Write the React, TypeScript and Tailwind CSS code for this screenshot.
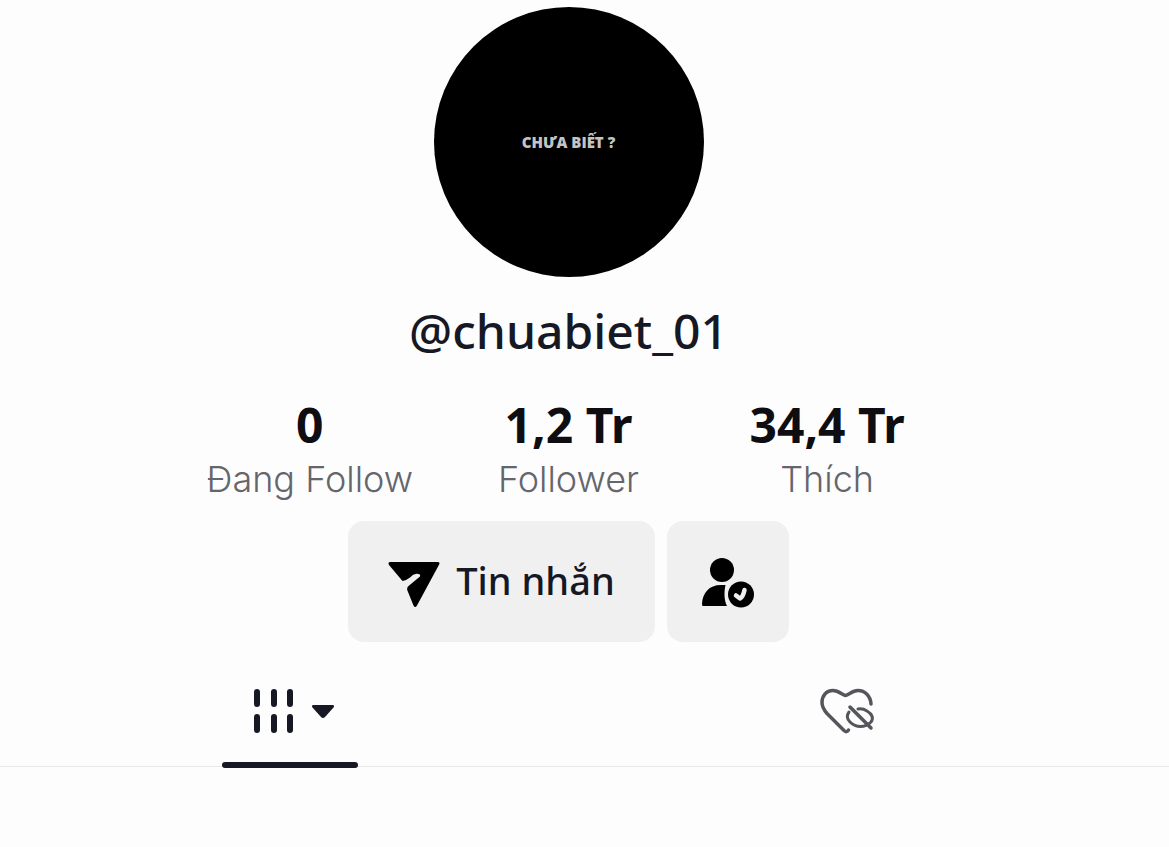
const stats = [
  { value: "0", label: "Đang Follow" },
  { value: "1,2 Tr", label: "Follower" },
  { value: "34,4 Tr", label: "Thích" },
];

function SendIcon() {
  return (
    <svg width="52" height="50" viewBox="0 -4 52 50" fill="currentColor" aria-hidden="true">
      <path d="M2.5 1H49.5Q52.5 1 51 3.700L29 44.500Q27 47.500 25.500 44.500L19.600 30Q18.300 27 20.500 25L32 15.500Q33 12.500 28.500 12.700Q25 13 22 16.500Q19 19 14.500 20L1 4Q-.5 1 2.500 1Z" />
    </svg>
  );
}

function UserCheckIcon() {
  return (
    <svg width="54" height="52" viewBox="0 -1 54 52" fill="currentColor" aria-hidden="true">
      <circle cx="21" cy="13" r="12" />
      <path d="M2 49Q1 49 1 47C1.500 36 8 28 20 28H24.500C23 35 23 43 26 49Z" />
      <circle cx="40" cy="37.500" r="13" />
      <path d="M35 38.500L39 41.500Q42 40 43.500 33" fill="none" stroke="#f0f0f0" strokeWidth="4.500" strokeLinecap="round" strokeLinejoin="round" />
    </svg>
  );
}

function GridIcon() {
  return (
    <svg width="42" height="48" viewBox="0 0 42 48" stroke="currentColor" strokeWidth="6" strokeLinecap="round" aria-hidden="true">
      <path d="M4 5V17M21 5V17M37 5V17M4 30V43M21 30V43M37 30V43" />
    </svg>
  );
}

function CaretIcon() {
  return (
    <svg width="24" height="16" viewBox="0 0 24 16" fill="currentColor" aria-hidden="true">
      <path d="M2.5 2H21.500Q24 2 22.500 4.500L14 14Q12 16 10 14L1.500 4.500Q0 2 2.500 2Z" />
    </svg>
  );
}

function HiddenLikesIcon() {
  return (
    <svg width="56" height="48" viewBox="0 0 56 48" fill="none" stroke="currentColor" strokeLinecap="round" strokeLinejoin="round" aria-hidden="true">
      <path d="M52 17C51.500 9 46 3.500 39 3.500C33 3.500 30 8 26.500 8.500C23 8 20 3.500 14 3.500C7 3.500 3 9 3 15.500C3 20 5 23 8 26.500L25 43.500Q28 46 29.500 43" strokeWidth="3.500" />
      <path d="M30 25C27 29 28 32 31 35C37 41 46 41 52 35C55 31 53 27 48 24C45 22 42 21.500 39 22" strokeWidth="3" />
      <path d="M31 20L52 41" strokeWidth="3.500" />
    </svg>
  );
}

export default function App() {
  return (
    <main className="min-h-screen bg-[#fdfdfd] font-['Noto_Sans',sans-serif] text-[#161823]">
      <section className="flex flex-col items-center pr-8 pt-[7px]">
        <div className="flex size-[270px] items-center justify-center rounded-full bg-black font-['Open_Sans',sans-serif] text-[15px] font-extrabold text-[#c4c4c4]">
          CHƯA BIẾT ?
        </div>

        <h1 className="mt-6 text-5xl/[60px] font-medium">@chuabiet_01</h1>

        <dl className="mt-9 grid w-full max-w-[776px] grid-cols-3 text-center">
          {stats.map((s) => (
            <div key={s.label} className="flex flex-col-reverse">
              <dt className="font-['Inter',sans-serif] text-4xl/[52px] font-light text-[#65666c]">{s.label}</dt>
              <dd className="text-5xl/[56px] font-bold text-[#0e0e12]">{s.value}</dd>
            </div>
          ))}
        </dl>

        <div className="mt-4 flex gap-3">
          <button className="flex h-[121px] items-center gap-4 rounded-2xl bg-[#f0f0f0] px-10">
            <span className="text-black">
              <SendIcon />
            </span>
            <span className="pb-1 text-[38px]/[52px] font-medium">Tin nhắn</span>
          </button>
          <button aria-label="Đang theo dõi" className="flex h-[121px] w-[122px] items-center justify-center rounded-2xl bg-[#f0f0f0] text-black">
            <UserCheckIcon />
          </button>
        </div>
      </section>

      <nav className="mt-10 border-b border-[#e9e9ea] pl-3 pr-11">
        <div className="grid grid-cols-2 justify-items-center">
          <button aria-label="Video" className="-mb-[2px] flex h-[86px] w-[136px] flex-col justify-between">
            <span className="flex w-full items-center justify-center gap-4 pl-2 pt-[5px]">
              <GridIcon />
              <CaretIcon />
            </span>
            <span className="h-[6px] w-full rounded-full bg-[#161823]" />
          </button>
          <button aria-label="Đã thích" className="flex items-start pt-[5px] text-[#55565c]">
            <HiddenLikesIcon />
          </button>
        </div>
      </nav>
    </main>
  );
}
